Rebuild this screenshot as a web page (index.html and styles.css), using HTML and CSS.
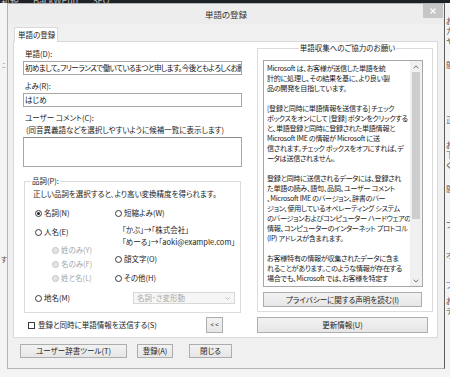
FILE: index.html
```html
<!DOCTYPE html>
<html lang="ja">
<head>
<meta charset="utf-8">
<title>単語の登録</title>
<link rel="stylesheet" href="styles.css">
</head>
<body>
<div class="screen">
  <div class="taskbar"><span>新規</span><span>BackWPup</span><span>SEO</span></div>
  <div class="desk">
    <div class="edge-left"><span class="frag fl1">ﾆ</span><span class="frag fl2">す</span></div>
    <div class="dialog">
      <div class="titlebar">
        <span class="title">単語の登録</span>
        <span class="close"><svg width="6" height="6" viewBox="0 0 6 6"><path d="M0.5 0.5 L5.5 5.5 M5.5 0.5 L0.5 5.5" stroke="#fff" stroke-width="1.1"/></svg></span>
      </div>
      <div class="tabs"><div class="tab">単語の登録</div></div>
      <div class="panel">
        <div class="left">
          <div class="lbl l1">単語(D):</div>
          <div class="input input-word">初めまして。フリーランスで働いているまつと申します。今後ともよろしくお願いいたします。</div>
          <div class="lbl l2">よみ(R):</div>
          <div class="input">はじめ</div>
          <div class="lbl l2">ユーザー コメント(C):</div>
          <div class="note">(同音異義語などを選択しやすいように候補一覧に表示します)</div>
          <div class="textarea"></div>
          <div class="group">
            <div class="legend"><span>品詞(P):</span></div>
            <div class="desc">正しい品詞を選択すると、より高い変換精度を得られます。</div>
            <div class="opts">
              <div class="ocol ocol-l">
                <div class="opt"><span class="radio on"></span>名詞(N)</div>
                <div class="opt o-jinmei"><span class="radio"></span>人名(E)</div>
                <div class="opt sub o-sei dis"><span class="radio"></span>姓のみ(Y)</div>
                <div class="opt sub o-tight dis"><span class="radio"></span>名のみ(F)</div>
                <div class="opt sub o-tight dis"><span class="radio"></span>姓と名(L)</div>
                <div class="opt o-chimei"><span class="radio"></span>地名(M)</div>
              </div>
              <div class="ocol ocol-r">
                <div class="opt"><span class="radio"></span>短縮よみ(W)</div>
                <div class="ex ex1">「かぶ」→「株式会社」</div>
                <div class="ex ex2">「めーる」→「aoki@example.com」</div>
                <div class="opt o-kao"><span class="radio"></span>顔文字(O)</div>
                <div class="opt o-sonota"><span class="radio"></span>その他(H)</div>
                <div class="select"><span>名詞･さ変形動</span><svg width="5" height="3" viewBox="0 0 5 3"><path d="M0.3 0.3 L2.5 2.5 L4.7 0.3" fill="none" stroke="#b0b0b0" stroke-width="0.8"/></svg></div>
              </div>
            </div>
          </div>
          <div class="checkrow">
            <span class="check"></span><span class="checktext">登録と同時に単語情報を送信する(S)</span>
            <span class="btn btn-back">&lt; &lt;</span>
          </div>
        </div>
        <div class="right">
          <div class="rgroup">
            <div class="rtitle"><span>単語収集へのご協力のお願い</span></div>
            <div class="infobox">
              <div class="infotext">Microsoft は、お客様が送信した単語を統<br>計的に処理し、その結果を基に、より良い製<br>品の開発を目指しています。<br><br>[登録と同時に単語情報を送信する] チェック<br>ボックスをオンにして [登録] ボタンをクリックする<br>と、単語登録と同時に登録された単語情報と<br>Microsoft IME の情報が Microsoft に送<br>信されます。チェック ボックスをオフにすれば、デ<br>ータは送信されません。<br><br>登録と同時に送信されるデータには、登録され<br>た単語の読み、語句、品詞、ユーザー コメント<br>、Microsoft IME のバージョン、辞書のバー<br>ジョン、使用しているオペレーティング システム<br>のバージョンおよびコンピューター ハードウェアの<br>情報、コンピューターのインターネット プロトコル<br>(IP) アドレスが含まれます。<br><br>お客様特有の情報が収集されたデータに含ま<br>れることがあります。このような情報が存在する<br>場合でも、Microsoft では、お客様を特定す</div>
              <div class="scrollbar">
                <svg class="arr" width="6" height="4" viewBox="0 0 6 4"><path d="M0.6 3.3 L3 0.9 L5.4 3.3" fill="none" stroke="#606060" stroke-width="0.9"/></svg>
                <div class="thumb"></div>
                <svg class="arr arr-down" width="6" height="4" viewBox="0 0 6 4"><path d="M0.6 0.7 L3 3.1 L5.4 0.7" fill="none" stroke="#606060" stroke-width="0.9"/></svg>
              </div>
            </div>
            <div class="btn btn-privacy">プライバシーに関する声明を読む(I)</div>
          </div>
          <div class="btn btn-update">更新情報(U)</div>
        </div>
      </div>
      <div class="footer">
        <span class="btn btn-tool">ユーザー辞書ツール(T)</span>
        <span class="btn btn-reg">登録(A)</span>
        <span class="btn btn-close">閉じる</span>
      </div>
    </div>
    <div class="edge-right">
      <span class="rf rf1">お</span><span class="rf rf2">カ</span><span class="rf rf3">ヤ</span><span class="rf rf4">間</span><span class="rf rf5">正</span><span class="rf rf6">お</span><span class="rf rf7">下</span><span class="rf rf8">く</span><span class="rf rf9">間</span><span class="rf rf10">フ</span><span class="rf rf11">オ</span><span class="rf rf12 blue">ブ</span><span class="rf rf13">お</span><span class="rf rf14">テ</span>
    </div>
  </div>
</div>
</body>
</html>
```

FILE: styles.css
```css
* {
  box-sizing: border-box;
  margin: 0;
  padding: 0;
}

html, body {
  width: 450px;
  height: 377px;
  overflow: hidden;
}

body {
  background: #f4f4f4;
  font-family: "Noto Sans CJK JP", "Noto Sans", sans-serif;
  font-size: 7.5px;
  line-height: 10px;
  color: #1a1a1a;
  font-feature-settings: "palt";
}

.screen {
  width: 450px;
  height: 377px;
  overflow: hidden;
  background: #f4f4f4;
}

/* top desktop strip */
.taskbar {
  height: 3px;
  background: #1e2226;
  overflow: hidden;
  color: #b9bcc0;
  font-size: 9px;
  line-height: 1px;
  white-space: nowrap;
  padding-left: 1px;
}

.taskbar span {
  margin-right: 14px;
}

.desk {
  display: flex;
  height: 374px;
}

.edge-left {
  width: 7px;
  flex: none;
  display: flex;
  flex-direction: column;
  color: #555;
  overflow: hidden;
}

.frag {
  font-size: 7px;
  line-height: 8px;
}

.fl1 { margin-top: 58px; margin-left: 2px; color: #888; }
.fl2 { margin-top: 186px; margin-left: 1px; }

.edge-right {
  width: 5px;
  flex: none;
  display: flex;
  flex-direction: column;
  overflow: hidden;
  color: #555;
  font-size: 8px;
  line-height: 8px;
  white-space: nowrap;
}

.rf { display: block; margin-left: 1px; }
.rf1 { margin-top: 14px; }
.rf2 { margin-top: 2px; }
.rf3 { margin-top: 2px; }
.rf4 { margin-top: 16px; }
.rf5 { margin-top: 47px; }
.rf6 { margin-top: 17px; }
.rf7 { margin-top: 2px; }
.rf8 { margin-top: 2px; }
.rf9 { margin-top: 16px; }
.rf10 { margin-top: 28px; }
.rf11 { margin-top: 22px; }
.rf12 { margin-top: 22px; }
.rf13 { margin-top: 8px; }
.rf14 { margin-top: 2px; }
.blue { color: #2a6fc0; }

/* dialog window */
.dialog {
  width: 438px;
  height: 366px;
  flex: none;
  background: #f0f0f0;
  border: 1px solid #b4b4b4;
  border-right-color: #5e5e5e;
  display: flex;
  flex-direction: column;
}

.titlebar {
  height: 20px;
  flex: none;
  display: grid;
  grid-template-columns: 1fr auto 1fr;
  align-items: start;
  background: #ededed;
}

.title {
  grid-column: 2;
  font-size: 8.5px;
  line-height: 10px;
  margin-top: 5px;
  color: #333;
}

.close {
  grid-column: 3;
  justify-self: end;
  width: 20px;
  height: 14px;
  margin-right: 1px;
  background: #c6c6c6;
  display: flex;
  align-items: center;
  justify-content: center;
}

.close svg { display: block; }

/* tabs */
.tabs {
  display: flex;
  margin: 3px 0 -1px 6px;
  height: 15px;
  flex: none;
}

.tab {
  position: relative;
  z-index: 1;
  width: 44px;
  height: 15px;
  background: #fff;
  border: 1px solid #d9d9d9;
  border-bottom: none;
  padding: 2px 0 0 3px;
  white-space: nowrap;
}

.panel {
  margin-left: 5px;
  width: 425px;
  height: 297px;
  flex: none;
  background: #fff;
  border: 1px solid #d9d9d9;
  display: flex;
  gap: 15px;
  padding: 0 4px 0 9px;
}

/* left column */
.left {
  width: 219px;
  flex: none;
  display: flex;
  flex-direction: column;
}

.lbl {
  padding-left: 2px;
  white-space: nowrap;
}

.l1 { margin-top: 7px; }
.l2 { margin-top: 6px; }

.input {
  margin-top: 2px;
  height: 14px;
  border: 1px solid #a7a7a7;
  background: #fff;
  padding: 1px 0 0 1px;
  white-space: nowrap;
  overflow: hidden;
  color: #111;
}

.input-word {
  letter-spacing: -0.55px;
}

.note {
  margin-top: 2px;
  padding-left: 3px;
  white-space: nowrap;
}

.textarea {
  margin-top: 2px;
  height: 30px;
  border: 1px solid #a7a7a7;
  border-top-color: #8a8a8a;
  background: #fff;
}

.group {
  margin: 14px 1px 0 1px;
  border: 1px solid #dcdcdc;
  padding-bottom: 8px;
}

.legend {
  margin-top: -6px;
  height: 10px;
  padding-left: 6px;
  display: flex;
}

.legend span {
  background: #fff;
  padding: 0 1px;
}

.desc {
  margin-top: 3px;
  padding-left: 8px;
  white-space: nowrap;
}

.opts {
  display: flex;
  margin-top: 9px;
}

.ocol {
  display: flex;
  flex-direction: column;
}

.ocol-l {
  width: 90px;
  padding-left: 10px;
}

.ocol-r {
  flex: 1;
}

.opt {
  display: flex;
  align-items: center;
  height: 10px;
  white-space: nowrap;
}

.radio {
  width: 7px;
  height: 7px;
  border: 1px solid #3a3a3a;
  border-radius: 50%;
  background: #fff;
  margin-right: 2px;
  flex: none;
  display: flex;
  align-items: center;
  justify-content: center;
}

.radio.on::after {
  content: "";
  width: 3px;
  height: 3px;
  border-radius: 50%;
  background: #222;
}

.sub { padding-left: 17px; }
.dis { color: #a6a6a6; }
.dis .radio { border-color: #c4c4c4; background: #e4e4e4; }

.o-jinmei { margin-top: 9px; }
.o-sei { margin-top: 8px; }
.o-tight { margin-top: 4px; }
.o-chimei { margin-top: 10px; }

.ex {
  padding-left: 7px;
  white-space: nowrap;
}

.ex1 { margin-top: 7px; }
.ex2 { margin-top: 2px; }
.o-kao { margin-top: 7px; }
.o-sonota { margin-top: 9px; }

.select {
  margin: 9px 0 0 18px;
  width: 102px;
  height: 12px;
  border: 1px solid #d7d7d7;
  background: #f6f6f6;
  color: #a8a8a8;
  display: flex;
  align-items: center;
  justify-content: space-between;
  padding: 0 4px 0 3px;
  white-space: nowrap;
}

.select svg { display: block; }

.checkrow {
  margin-top: 4px;
  height: 16px;
  display: flex;
  align-items: center;
  padding-left: 5px;
}

.check {
  width: 7px;
  height: 7px;
  border: 1px solid #3a3a3a;
  background: #fff;
  margin-right: 3px;
  flex: none;
}

.checktext { white-space: nowrap; }

/* buttons */
.btn {
  display: flex;
  align-items: center;
  justify-content: center;
  border: 1px solid #adadad;
  background: linear-gradient(#f2f2f2, #e6e6e6);
  white-space: nowrap;
  color: #1a1a1a;
}

.btn-back {
  margin-left: auto;
  margin-right: 19px;
  width: 17px;
  height: 16px;
  font-size: 6px;
  letter-spacing: 0;
}

/* right column */
.right {
  width: 176px;
  flex: none;
  display: flex;
  flex-direction: column;
}

.rgroup {
  margin-top: 6px;
  border: 1px solid #dcdcdc;
  padding: 0 0 4px 5px;
}

.rtitle {
  margin-top: -6px;
  height: 10px;
  display: flex;
  justify-content: center;
}

.rtitle span {
  background: #fff;
  padding: 0 1px;
  white-space: nowrap;
}

.infobox {
  margin-top: 7px;
  width: 160px;
  height: 227px;
  border: 1px solid #a7a7a7;
  background: #fff;
  display: flex;
}

.infotext {
  flex: 1;
  padding: 2px 0 0 3px;
  white-space: nowrap;
  overflow: hidden;
  font-size: 7.1px;
  letter-spacing: -0.3px;
  line-height: 10px;
}

.scrollbar {
  width: 12px;
  flex: none;
  background: #f0f0f0;
  display: flex;
  flex-direction: column;
  align-items: center;
  padding: 4px 0 3px 0;
}

.arr { display: block; flex: none; }

.thumb {
  margin-top: 3px;
  width: 8px;
  height: 147px;
  background: #cdcdcd;
}

.arr-down { margin-top: auto; }

.btn-privacy {
  margin-top: 5px;
  width: 159px;
  height: 15px;
}

.btn-update {
  margin-top: 5px;
  width: 171px;
  height: 16px;
}

/* footer */
.footer {
  display: flex;
  margin-top: 6px;
  padding-left: 12px;
  height: 14px;
}

.btn-tool { width: 107px; }
.btn-reg { width: 36px; margin-left: 10px; }
.btn-close { width: 43px; margin-left: 16px; }
```
